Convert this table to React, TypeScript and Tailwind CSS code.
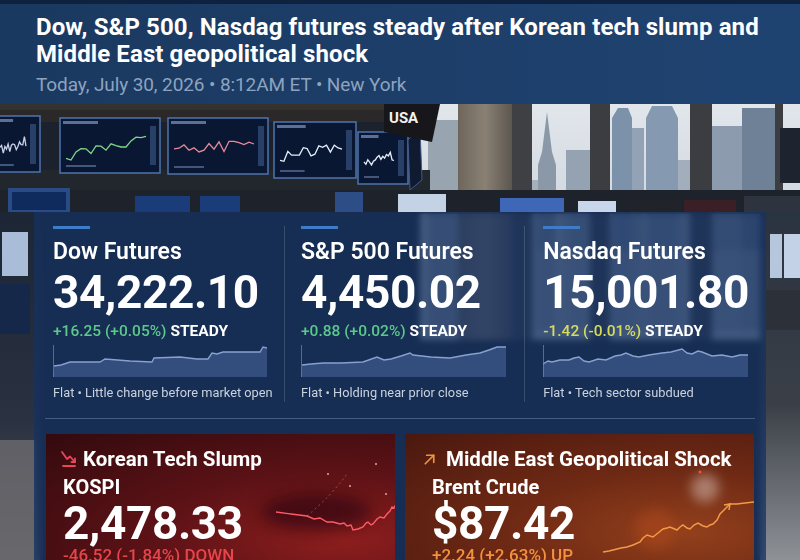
import React from "react";

function zig(x0: number, y0: number, w: number, h: number, n: number, seed: number, trend: number) {
  const pts: string[] = [];
  let s = seed;
  for (let i = 0; i <= n; i++) {
    s = (s * 9301 + 49297) % 233280;
    const r = s / 233280;
    const x = x0 + (w * i) / n;
    const y = y0 + h * 0.5 - trend * h * (i / n - 0.5) + (r - 0.5) * h * 0.45;
    pts.push(`${x.toFixed(1)},${y.toFixed(1)}`);
  }
  return pts.join(" ");
}

function Monitor({ x, y, w, h, seed, color, trend }: { x: number; y: number; w: number; h: number; seed: number; color: string; trend: number }) {
  return (
    <g>
      <rect x={x} y={y} width={w} height={h} fill="#0a1733" stroke="#4f74ad" strokeWidth="1.5" />
      <rect x={x + 3} y={y + 3} width={w * 0.35} height="3" fill="#7d97c4" opacity="0.7" />
      <rect x={x + w - 10} y={y + 8} width="6" height={h - 16} fill="#3c5a8a" opacity="0.6" />
      <polyline points={zig(x + 6, y + h * 0.3, w - 20, h * 0.45, 16, seed, trend)} fill="none" stroke={color} strokeWidth="1.3" />
      <rect x={x + 6} y={y + h - 8} width={w * 0.3} height="2" fill="#7d97c4" opacity="0.5" />
    </g>
  );
}

function Scene() {
  return (
    <svg className="absolute left-0 top-0" width="800" height="560" viewBox="0 0 800 560">
      <defs>
        <linearGradient id="sky" x1="0" y1="0" x2="0" y2="1">
          <stop offset="0" stopColor="#e2e7ec" />
          <stop offset="1" stopColor="#bcc6cf" />
        </linearGradient>
        <linearGradient id="pillar" x1="0" y1="0" x2="1" y2="0">
          <stop offset="0" stopColor="#6e665b" />
          <stop offset="0.5" stopColor="#8a8174" />
          <stop offset="1" stopColor="#5c5650" />
        </linearGradient>
        <linearGradient id="floorL" x1="0" y1="0" x2="0" y2="1">
          <stop offset="0" stopColor="#1c2635" />
          <stop offset="0.6" stopColor="#2a3140" />
          <stop offset="1" stopColor="#5d5d63" />
        </linearGradient>
        <linearGradient id="floorR" x1="0" y1="0" x2="0" y2="1">
          <stop offset="0" stopColor="#2a3340" />
          <stop offset="0.55" stopColor="#3a3f47" />
          <stop offset="1" stopColor="#8e9196" />
        </linearGradient>
      </defs>
      <rect x="0" y="100" width="800" height="460" fill="#1b222d" />
      <rect x="0" y="100" width="470" height="22" fill="#2a2828" />
      <rect x="0" y="104" width="420" height="6" fill="#3a3530" opacity="0.7" />
      <rect x="420" y="100" width="380" height="240" fill="url(#sky)" />
      <rect x="428" y="120" width="30" height="210" fill="#98a4b0" />
      <rect x="532" y="180" width="14" height="150" fill="#a5b0bb" />
      <polygon points="538,330 538,165 542,152 545,128 547,112 549,128 552,152 556,165 556,330" fill="#8a98a8" />
      <rect x="566" y="150" width="24" height="180" fill="#95a2b1" />
      <rect x="560" y="195" width="10" height="135" fill="#a9b3bd" />
      <polygon points="612,330 612,118 618,108 628,108 632,118 632,330" fill="#7c91aa" />
      <rect x="632" y="128" width="12" height="202" fill="#93a3b5" />
      <polygon points="646,330 646,118 652,106 672,106 678,118 678,330" fill="#8599b0" />
      <rect x="678" y="160" width="12" height="170" fill="#a2aebb" />
      <rect x="712" y="126" width="30" height="204" fill="#8c9bad" />
      <rect x="742" y="108" width="33" height="222" fill="#6f8197" />
      <rect x="530" y="250" width="250" height="80" fill="#b3bdc6" opacity="0.55" />
      <rect x="458" y="100" width="54" height="240" fill="url(#pillar)" />
      <rect x="512" y="100" width="20" height="240" fill="#3e4044" />
      <rect x="590" y="100" width="20" height="240" fill="#3b3d41" />
      <rect x="690" y="100" width="22" height="240" fill="#3b3d41" />
      <rect x="775" y="100" width="8" height="240" fill="#3b3d41" />
      <rect x="780" y="128" width="20" height="55" fill="#1d2430" />
      <rect x="0" y="170" width="430" height="20" fill="#22262d" />
      <Monitor x={-6} y={116} w={46} h={56} seed={3} color="#c8d2e6" trend={0.3} />
      <Monitor x={60} y={118} w={100} h={55} seed={11} color="#7ed68a" trend={0.8} />
      <Monitor x={168} y={118} w={100} h={56} seed={27} color="#e98a9a" trend={0.3} />
      <Monitor x={274} y={122} w={82} h={56} seed={41} color="#e6eefc" trend={0.4} />
      <Monitor x={358} y={132} w={50} h={52} seed={55} color="#e6eefc" trend={0.3} />
      <polygon points="408,140 420,128 422,180 410,190" fill="#101a30" stroke="#3e5c8c" strokeWidth="1" />
      <polygon points="384,104 440,104 432,142 384,132" fill="#17171b" />
      <text x="389" y="123" fill="#f2f2f2" fontSize="15" fontWeight="700" fontFamily="Roboto, sans-serif">USA</text>
      <rect x="0" y="190" width="800" height="24" fill="#1e232b" />
      <rect x="8" y="188" width="62" height="24" fill="#294c86" />
      <rect x="12" y="192" width="54" height="18" fill="#0f2a5c" />
      <rect x="135" y="196" width="55" height="16" fill="#1a3c78" />
      <rect x="200" y="196" width="40" height="16" fill="#1a3c78" />
      <rect x="335" y="192" width="28" height="20" fill="#2c4d86" />
      <rect x="398" y="194" width="48" height="18" fill="#c4d2e6" />
      <rect x="500" y="198" width="64" height="14" fill="#3e67b8" />
      <rect x="578" y="201" width="38" height="11" fill="#c8d6ec" />
      <rect x="630" y="200" width="52" height="12" fill="#20232a" />
      <rect x="684" y="200" width="52" height="12" fill="#3a2026" />
      <rect x="744" y="196" width="56" height="16" fill="#2d3440" />
      <rect x="0" y="212" width="40" height="348" fill="url(#floorL)" />
      <rect x="2" y="232" width="26" height="44" fill="#a9bdd8" />
      <rect x="0" y="284" width="30" height="50" fill="#16284a" />
      <rect x="0" y="440" width="36" height="120" fill="#6c6a6e" opacity="0.8" />
      <rect x="760" y="212" width="40" height="348" fill="url(#floorR)" />
      <rect x="770" y="234" width="12" height="44" fill="#b5c6dd" />
      <rect x="784" y="234" width="16" height="44" fill="#c3d2e6" />
      <rect x="766" y="290" width="34" height="40" fill="#2b3039" />
    </svg>
  );
}

function Spark({ pts, w }: { pts: number[][]; w: number }) {
  const line = pts.map((p) => p.join(",")).join(" ");
  const area = `0,32 ${line} ${w},32`;
  return (
    <svg width={w} height="32" viewBox={`0 0 ${w} 32`} className="mt-[4px] block">
      <polygon points={area} fill="#4a6a9e" fillOpacity="0.55" />
      <polyline points={line} fill="none" stroke="#86a2cf" strokeWidth="1.4" />
      <line x1="0.5" y1="0" x2="0.5" y2="32" stroke="#7e95bb" strokeOpacity="0.6" strokeWidth="1" />
    </svg>
  );
}

function Col({
  title,
  value,
  change,
  changeColor,
  caption,
  pts,
  w,
}: {
  title: string;
  value: string;
  change: string;
  changeColor: string;
  caption: string;
  pts: number[][];
  w: number;
}) {
  return (
    <div>
      <div className="h-[3px] w-[37px] bg-[#3e7cc8]" />
      <div className="mt-[9px] text-[23px] leading-[28px] font-semibold text-white">{title}</div>
      <div className="mt-[3px] text-[46px] leading-[46px] font-bold tracking-[-0.4px] text-white">{value}</div>
      <div className="mt-[6px] whitespace-nowrap text-[15.5px] leading-[20px] font-medium">
        <span className={changeColor}>{change}</span> <span className="font-bold text-white">STEADY</span>
      </div>
      <Spark pts={pts} w={w} />
      <div className="mt-[7px] whitespace-nowrap text-[12.8px] leading-[18px] text-[#c9d2de]">{caption}</div>
    </div>
  );
}

export default function App() {
  const dow = [[1, 21], [8, 20], [17, 17], [47, 17], [52, 14], [77, 16], [99, 17], [101, 13], [127, 12], [144, 14], [155, 14], [159, 8], [164, 9], [170, 7], [207, 7], [210, 2], [214, 3]];
  const sp = [[1, 20], [10, 19], [22, 18], [40, 18], [62, 17], [76, 12], [83, 15], [90, 14], [100, 11], [109, 8], [112, 10], [130, 12], [149, 13], [165, 10], [179, 8], [188, 5], [196, 2], [205, 2]];
  const nq = [[0, 19], [5, 16], [9, 17], [17, 15], [26, 15], [31, 13], [36, 12], [41, 16], [46, 17], [55, 14], [63, 15], [72, 11], [78, 10], [83, 8], [90, 11], [96, 12], [106, 10], [119, 8], [128, 7], [139, 4], [144, 8], [149, 9], [155, 6], [159, 7], [169, 11], [179, 10], [189, 12], [197, 10], [205, 10]];
  return (
    <div className="relative h-[560px] w-[800px] overflow-hidden bg-[#1b222d] font-['Roboto',sans-serif]">
      <Scene />
      <header className="relative h-[104px] border-t-[4px] border-[#0e2240] bg-gradient-to-r from-[#1a3960] to-[#1f4371] px-[36px] pt-[10px]">
        <h1 className="text-[24px] leading-[27px] font-bold tracking-[0.1px] text-white">
          Dow, S&amp;P 500, Nasdag futures steady after Korean tech slump and Middle East geopolitical shock
        </h1>
        <p className="mt-[5px] text-[19px] leading-[24px] tracking-[-0.1px] text-[#8ea3bf]">Today, July 30, 2026 • 8:12AM ET • New York</p>
      </header>
      <div className="relative ml-[34px] mt-[108px] h-[360px] w-[732px] bg-[#163262]/75 backdrop-blur-[3px]">
        <div className="flex pl-[19px] pr-[17px] pt-[14px]">
          <div className="w-[231px] pr-[17px]">
            <Col title="Dow Futures" value="34,222.10" change="+16.25 (+0.05%)" changeColor="text-[#5cc98a]" caption="Flat • Little change before market open" pts={dow} w={214} />
          </div>
          <div className="w-px bg-white/15" />
          <div className="w-[240px] pl-[16px] pr-[18px]">
            <Col title="S&P 500 Futures" value="4,450.02" change="+0.88 (+0.02%)" changeColor="text-[#5cc98a]" caption="Flat • Holding near prior close" pts={sp} w={205} />
          </div>
          <div className="w-px bg-white/15" />
          <div className="flex-1 pl-[18px]">
            <Col title="Nasdaq Futures" value="15,001.80" change="-1.42 (-0.01%)" changeColor="text-[#d6db5e]" caption="Flat • Tech sector subdued" pts={nq} w={205} />
          </div>
        </div>
        <div className="mx-[11px] mt-[16px] h-px bg-[#8aa3c4]/40" />
        <div className="flex gap-[10px] px-[12px] pt-[15px]">
          <div className="relative h-[140px] w-[349px] shrink-0 overflow-hidden bg-[radial-gradient(ellipse_at_85%_75%,#8e1e1e_0%,#5c1216_45%,#320a0e_100%)] pl-[17px] pt-[12px] text-white">
            <svg className="absolute left-0 top-0" width="350" height="140" viewBox="0 0 350 140">
              <defs>
                <filter id="blurA" x="-50%" y="-50%" width="200%" height="200%">
                  <feGaussianBlur stdDeviation="8" />
                </filter>
              </defs>
              <ellipse cx="270" cy="78" rx="55" ry="18" fill="#1c0507" opacity="0.55" filter="url(#blurA)" />
              <path d="M261 82 Q 285 62 301 40" fill="none" stroke="#e36a6a" strokeOpacity="0.6" strokeWidth="1" strokeDasharray="2 3" />
              <polyline points="230,78 245,80 261,82 268,85 274,84 281,88 287,88 294,90 298,89 301,92 305,91 307,96 312,95 317,93 320,89 322,88 325,91 327,90 331,85 334,83 338,84 341,80 344,77 346,73 348,74 350,70" fill="none" stroke="#ff5a66" strokeWidth="1.4" />
              <circle cx="282" cy="40" r="1" fill="#f0a0a0" />
              <circle cx="304" cy="52" r="1" fill="#f0a0a0" />
              <circle cx="330" cy="30" r="1" fill="#f0a0a0" />
              <circle cx="340" cy="60" r="1" fill="#f0a0a0" />
            </svg>
            <div className="relative -ml-[3px] flex items-center gap-[5px] text-[20.5px] leading-[26px] font-bold">
              <svg width="18" height="18" viewBox="0 0 18 18" fill="none" stroke="#e8475a" strokeWidth="1.8" strokeLinecap="round" strokeLinejoin="round">
                <path d="M2 2 L7 9 L10 6.5 L15 12" />
                <path d="M11.5 12 H15 V8.5" />
                <path d="M3 16 H15" />
              </svg>
              Korean Tech Slump
            </div>
            <div className="relative mt-[3px] text-[20px] leading-[24px] font-bold">KOSPI</div>
            <div className="relative mt-[2px] text-[46px] leading-[44px] font-bold tracking-[-0.4px]">2,478.33</div>
            <div className="relative text-[17px] leading-[20px] font-medium text-[#e6454a]">-46.52 (-1.84%) DOWN</div>
          </div>
          <div className="relative h-[140px] w-[349px] shrink-0 overflow-hidden bg-[radial-gradient(ellipse_at_80%_70%,#93401c_0%,#6e2914_45%,#4a180f_100%)] pl-[27px] pt-[12px] text-white">
            <svg className="absolute left-0 top-0" width="350" height="140" viewBox="0 0 350 140">
              <defs>
                <filter id="blurB" x="-50%" y="-50%" width="200%" height="200%">
                  <feGaussianBlur stdDeviation="6" />
                </filter>
              </defs>
              <circle cx="300" cy="54" r="14" fill="#e8d8d0" opacity="0.45" filter="url(#blurB)" />
              <circle cx="250" cy="95" r="20" fill="#c0501e" opacity="0.35" filter="url(#blurB)" />
              <circle cx="295" cy="38" r="1.5" fill="#ff4a3a" />
              <polyline points="198,118 204,117 208,116 216,114 222,113 228,111 235,108 238,104 242,101 248,103 253,99 258,95 262,94 265,93 272,96 275,93 278,91 282,94 285,95 289,91 293,89 298,92 302,93 305,91 308,90 312,86 315,80 320,75 325,70 332,70 340,69 350,68" fill="none" stroke="#f39a4a" strokeWidth="1.5" />
              <path d="M319 71 L325 70 L324 76" fill="none" stroke="#f39a4a" strokeWidth="1.5" />
            </svg>
            <div className="relative -ml-[11px] flex items-center gap-[8px] text-[20.5px] leading-[26px] font-bold">
              <svg width="17" height="17" viewBox="0 0 24 24" fill="none" stroke="#f0913c" strokeWidth="2.4" strokeLinecap="round" strokeLinejoin="round">
                <path d="M6 18 L18 6" />
                <path d="M8 6 H18 V16" />
              </svg>
              Middle East Geopolitical Shock
            </div>
            <div className="relative mt-[3px] text-[20px] leading-[24px] font-bold">Brent Crude</div>
            <div className="relative mt-[2px] text-[46px] leading-[44px] font-bold tracking-[-0.4px]">$87.42</div>
            <div className="relative text-[17px] leading-[20px] font-medium text-[#f2913e]">+2.24 (+2.63%) UP</div>
          </div>
        </div>
      </div>
    </div>
  );
}
